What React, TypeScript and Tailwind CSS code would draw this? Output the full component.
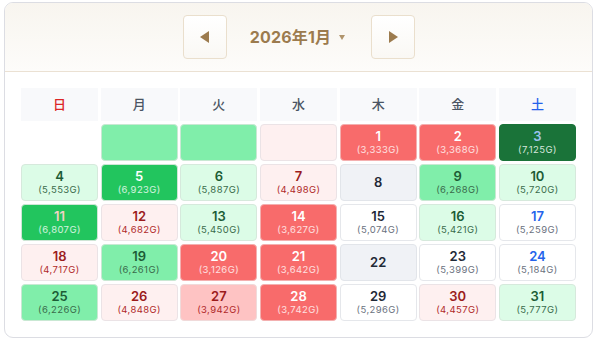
import React from "react";

type Cell = {
  d?: number;
  v?: string;
  bg: string;
  num: string;
  val: string;
};

const W = "bg-white border-[#e5e7eb]";
const G1 = "bg-[#dcfce7] border-[#d6e9dc]";
const G3 = "bg-[#80eeaa] border-[#c9e8d3]";
const G5 = "bg-[#22c55e] border-[#cfe5d6]";
const G7 = "bg-[#1a7339] border-[#1a7339]";
const R0 = "bg-[#fef0f0] border-[#ebe3e6]";
const R2 = "bg-[#fec3c3] border-[#f0dada]";
const R4 = "bg-[#f86b6b] border-[#f3b0b0]";
const GR = "bg-[#f0f2f6] border-[#e2e5ea]";

const gN = "text-[#1d5c36]";
const gV = "text-[#3a6b4b]";
const rN = "text-[#9b1c1c]";
const rV = "text-[#b02a2a]";
const wN = "text-white";
const wV = "text-white/80";
const kN = "text-[#1f2937]";
const kV = "text-[#6b7280]";
const bN = "text-[#2563eb]";

const rows: Cell[][] = [
  [
    { bg: "bg-white border-transparent", num: "", val: "" },
    { bg: G3, num: "", val: "" },
    { bg: G3, num: "", val: "" },
    { bg: R0, num: "", val: "" },
    { d: 1, v: "3,333G", bg: R4, num: wN, val: wV },
    { d: 2, v: "3,368G", bg: R4, num: wN, val: wV },
    { d: 3, v: "7,125G", bg: G7, num: "text-[#9ec3ee]", val: "text-[#d6e6dc]" },
  ],
  [
    { d: 4, v: "5,553G", bg: G1, num: gN, val: gV },
    { d: 5, v: "6,923G", bg: G5, num: wN, val: wV },
    { d: 6, v: "5,887G", bg: G1, num: gN, val: gV },
    { d: 7, v: "4,498G", bg: R0, num: rN, val: rV },
    { d: 8, bg: GR, num: kN, val: kV },
    { d: 9, v: "6,268G", bg: G3, num: gN, val: gV },
    { d: 10, v: "5,720G", bg: G1, num: gN, val: gV },
  ],
  [
    { d: 11, v: "6,807G", bg: G5, num: "text-[#f3d3c4]", val: wV },
    { d: 12, v: "4,682G", bg: R0, num: rN, val: rV },
    { d: 13, v: "5,450G", bg: G1, num: gN, val: gV },
    { d: 14, v: "3,627G", bg: R4, num: wN, val: wV },
    { d: 15, v: "5,074G", bg: W, num: kN, val: kV },
    { d: 16, v: "5,421G", bg: G1, num: gN, val: gV },
    { d: 17, v: "5,259G", bg: W, num: bN, val: kV },
  ],
  [
    { d: 18, v: "4,717G", bg: R0, num: rN, val: rV },
    { d: 19, v: "6,261G", bg: G3, num: gN, val: gV },
    { d: 20, v: "3,126G", bg: R4, num: wN, val: wV },
    { d: 21, v: "3,642G", bg: R4, num: wN, val: wV },
    { d: 22, bg: GR, num: kN, val: kV },
    { d: 23, v: "5,399G", bg: W, num: kN, val: kV },
    { d: 24, v: "5,184G", bg: W, num: bN, val: kV },
  ],
  [
    { d: 25, v: "6,226G", bg: G3, num: gN, val: gV },
    { d: 26, v: "4,848G", bg: R0, num: rN, val: rV },
    { d: 27, v: "3,942G", bg: R2, num: rN, val: rV },
    { d: 28, v: "3,742G", bg: R4, num: wN, val: wV },
    { d: 29, v: "5,296G", bg: W, num: kN, val: kV },
    { d: 30, v: "4,457G", bg: R0, num: rN, val: rV },
    { d: 31, v: "5,777G", bg: G1, num: gN, val: gV },
  ],
];

const days = [
  { t: "日", c: "text-[#dc2626]" },
  { t: "月", c: "text-[#4b5563]" },
  { t: "火", c: "text-[#4b5563]" },
  { t: "水", c: "text-[#4b5563]" },
  { t: "木", c: "text-[#4b5563]" },
  { t: "金", c: "text-[#4b5563]" },
  { t: "土", c: "text-[#2563eb]" },
];

function NavButton({ dir }: { dir: "l" | "r" }) {
  return (
    <button className="w-[44px] h-[44px] rounded-[4px] border border-[#eadfcd] bg-gradient-to-b from-white to-[#faf8f4] flex items-center justify-center">
      <svg width="12" height="14" viewBox="0 0 12 14">
        {dir === "l" ? (
          <polygon points="10,1 10,13 1,7" fill="#9c7b4e" />
        ) : (
          <polygon points="2,1 2,13 11,7" fill="#9c7b4e" />
        )}
      </svg>
    </button>
  );
}

export default function App() {
  return (
    <div
      className="w-[597px] h-[342px] bg-white pt-[2px] px-[4px]"
      style={{ fontFamily: "Inter, 'Noto Sans CJK JP', 'Noto Sans', sans-serif" }}
    >
      <div className="w-[589px] h-[336px] border border-[#dcdde3] rounded-[9px] overflow-hidden bg-white">
        <div className="h-[69px] border-b border-[#ebe1d3] bg-gradient-to-b from-[#f8f5ef] to-[#fdfcfa] flex items-center justify-center gap-[23px] pl-[1px]">
          <NavButton dir="l" />
          <div className="flex items-center gap-[8px] mr-[3px] text-[#9c7b4e]">
            <span className="text-[16px] font-bold tracking-[0.2px]">2026年1月</span>
            <svg width="6" height="5" viewBox="0 0 6 5" className="mt-[1px]">
              <polygon points="0,0 6,0 3,5" fill="#b0946c" />
            </svg>
          </div>
          <NavButton dir="r" />
        </div>
        <div className="p-4">
          <div className="grid grid-cols-7 grid-rows-[33px_repeat(5,37.5px)] gap-[2.5px]">
            {days.map((d) => (
              <div
                key={d.t}
                className={`bg-[#f8f9fb] flex items-center justify-center text-[13px] font-medium ${d.c}`}
              >
                {d.t}
              </div>
            ))}
            {rows.flat().map((c, i) => (
              <div
                key={i}
                className={`border rounded-[4px] flex flex-col items-center justify-center ${c.bg}`}
              >
                {c.d !== undefined && (
                  <span className={`text-[13px] font-semibold leading-[15px] ${c.num}`}>{c.d}</span>
                )}
                {c.v && (
                  <span className={`text-[9.5px] leading-[12px] tracking-[0.4px] ${c.val}`}>({c.v})</span>
                )}
              </div>
            ))}
          </div>
        </div>
      </div>
    </div>
  );
}
